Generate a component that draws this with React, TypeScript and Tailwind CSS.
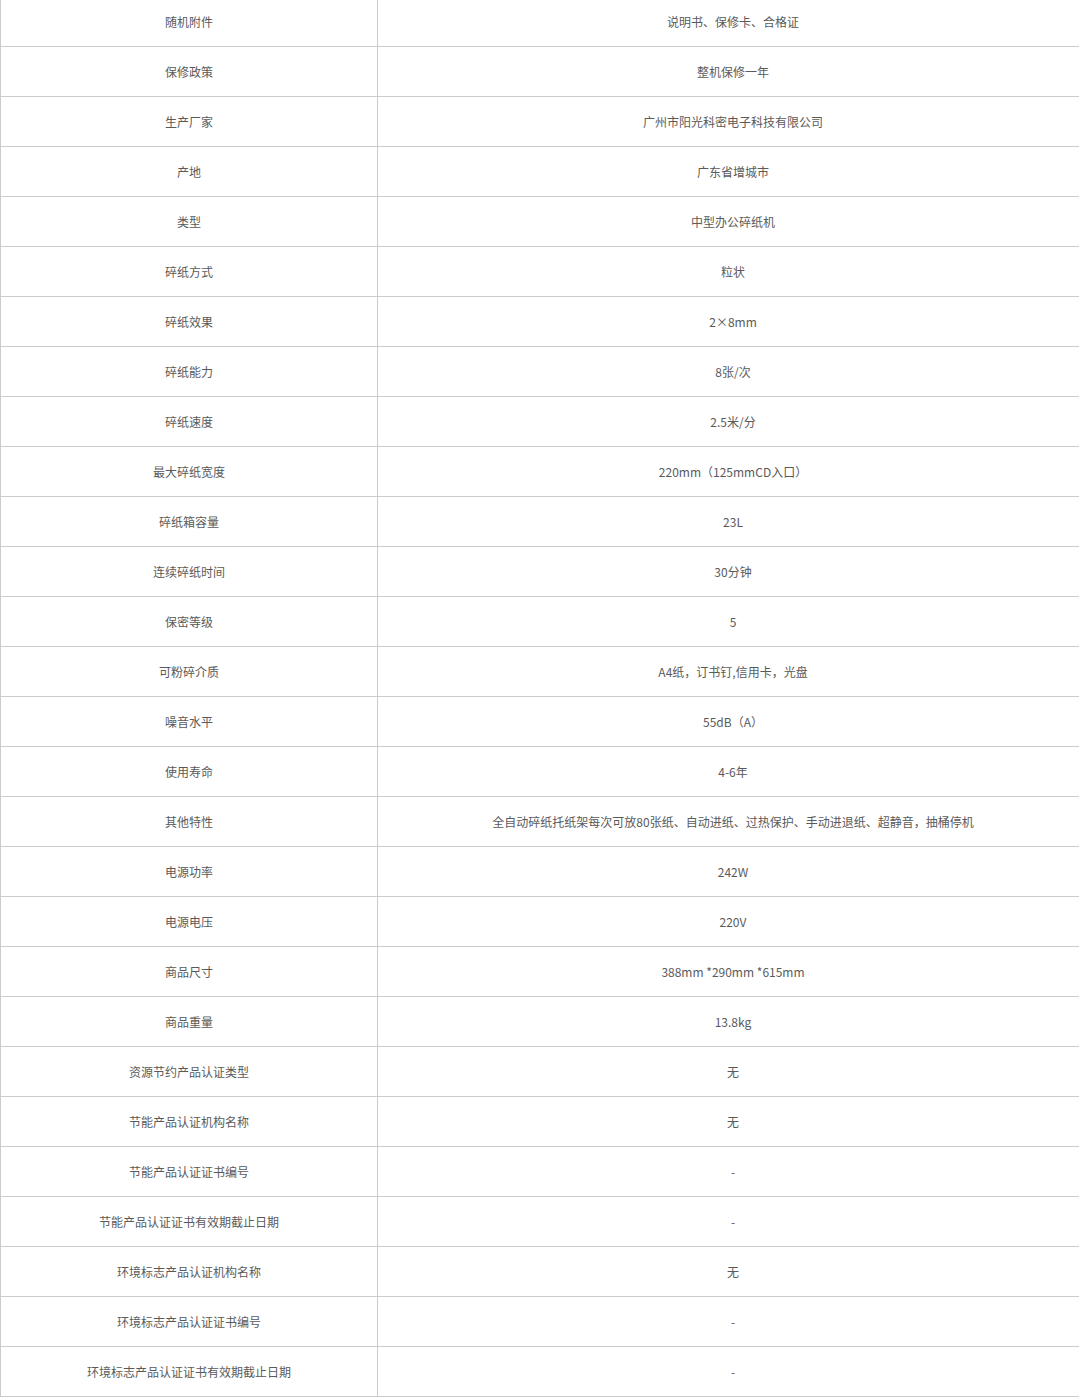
const ROWS: [string, string][] = [
  ['随机附件', '说明书、保修卡、合格证'],
  ['保修政策', '整机保修一年'],
  ['生产厂家', '广州市阳光科密电子科技有限公司'],
  ['产地', '广东省增城市'],
  ['类型', '中型办公碎纸机'],
  ['碎纸方式', '粒状'],
  ['碎纸效果', '2×8mm'],
  ['碎纸能力', '8张/次'],
  ['碎纸速度', '2.5米/分'],
  ['最大碎纸宽度', '220mm（125mmCD入口）'],
  ['碎纸箱容量', '23L'],
  ['连续碎纸时间', '30分钟'],
  ['保密等级', '5'],
  ['可粉碎介质', 'A4纸，订书钉,信用卡，光盘'],
  ['噪音水平', '55dB（A）'],
  ['使用寿命', '4-6年'],
  ['其他特性', '全自动碎纸托纸架每次可放80张纸、自动进纸、过热保护、手动进退纸、超静音，抽桶停机'],
  ['电源功率', '242W'],
  ['电源电压', '220V'],
  ['商品尺寸', '388mm *290mm *615mm'],
  ['商品重量', '13.8kg'],
  ['资源节约产品认证类型', '无'],
  ['节能产品认证机构名称', '无'],
  ['节能产品认证证书编号', '-'],
  ['节能产品认证证书有效期截止日期', '-'],
  ['环境标志产品认证机构名称', '无'],
  ['环境标志产品认证证书编号', '-'],
  ['环境标志产品认证证书有效期截止日期', '-'],
]

export default function App() {
  return (
    <div
      className="w-[1079px] h-[1398px] overflow-hidden bg-white text-[12px] text-[#5a5a5a]"
      style={{ fontFamily: '"Noto Sans CJK SC", "Noto Sans", sans-serif' }}
    >
      <div className="w-[1088px] -mt-[3px] border-l border-[#ccc]">
        {ROWS.map(([k, v]) => (
          <div key={k} className="flex h-[50px] border-b border-[#ccc]">
            <div className="w-[377px] shrink-0 flex items-center justify-center border-r border-[#ccc]">
              {k}
            </div>
            <div className="flex-1 flex items-center justify-center">{v}</div>
          </div>
        ))}
      </div>
    </div>
  )
}
